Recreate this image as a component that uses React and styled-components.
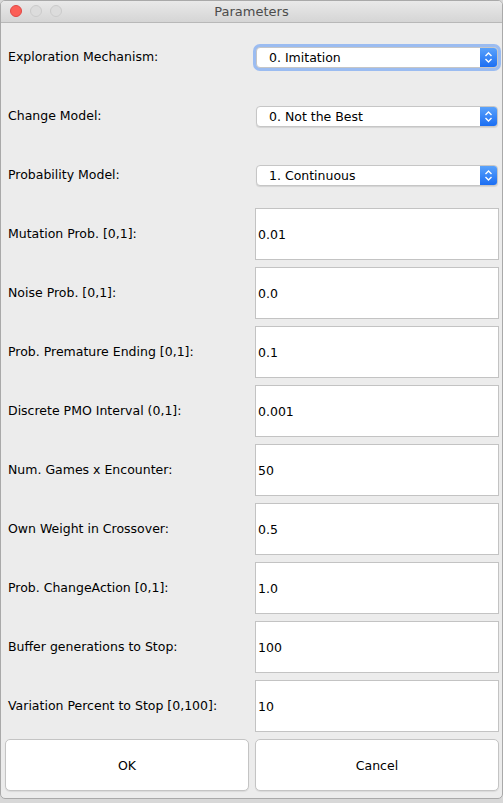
import React from "react";
import styled, { createGlobalStyle } from "styled-components";

const Global = createGlobalStyle`
  html, body {
    margin: 0;
    padding: 0;
    background: #d8d8d8;
  }
  body {
    font-family: "DejaVu Sans", "Liberation Sans", sans-serif;
  }
`;

const Window = styled.div`
  width: 503px;
  height: 799px;
  box-sizing: border-box;
  background: #ececec;
  border: 1px solid #a9a9a9;
  border-radius: 5px;
  overflow: hidden;
  display: flex;
  flex-direction: column;
`;

const TitleBar = styled.div`
  height: 21px;
  flex: none;
  position: relative;
  display: flex;
  align-items: center;
  justify-content: center;
  background: linear-gradient(#e9e9e9, #d5d5d5);
  border-bottom: 1px solid #b8b8b8;
  font-size: 13px;
  color: #4c4c4c;
`;

const Lights = styled.div`
  position: absolute;
  left: 9px;
  top: 4px;
  display: flex;
  gap: 8px;
`;

const Light = styled.span`
  width: 12px;
  height: 12px;
  border-radius: 50%;
  box-sizing: border-box;
  background: ${(p) => (p.$red ? "#fc5f57" : "#dcdcdc")};
  border: 1px solid ${(p) => (p.$red ? "#df4744" : "#cacaca")};
`;

const Form = styled.div`
  display: grid;
  grid-template-columns: 244px 244px;
  grid-auto-rows: 52px;
  column-gap: 6px;
  row-gap: 7px;
  padding: 8px 0 0 4px;
`;

const Label = styled.div`
  display: flex;
  align-items: center;
  padding-left: 3px;
  padding-bottom: 1px;
  font-size: 12.5px;
  color: #000;
`;

const ComboCell = styled.div`
  display: flex;
  align-items: center;
  padding-left: 1px;
`;

const Combo = styled.div`
  width: 242px;
  height: 21px;
  box-sizing: border-box;
  display: flex;
  background: #fff;
  border-radius: 4px;
  border: 1px solid #c6c6c6;
  box-shadow: ${(p) =>
    p.$focus ? "0 0 0 3px rgba(90,150,245,0.55)" : "0 1px 1px rgba(0,0,0,0.1)"};
  overflow: hidden;
`;

const ComboText = styled.div`
  flex: 1;
  display: flex;
  align-items: center;
  padding-left: 12px;
  font-size: 12.5px;
  color: #000;
`;

const ComboArrow = styled.div`
  width: 17px;
  display: flex;
  align-items: center;
  justify-content: center;
  background: linear-gradient(#5aa2fb, #1b6ef3);
`;

const Field = styled.div`
  box-sizing: border-box;
  height: 52px;
  width: 244px;
  background: #fff;
  border: 1px solid #c3c3c3;
  display: flex;
  align-items: center;
  padding-left: 2px;
  font-size: 12.5px;
  color: #000;
`;

const Button = styled.div`
  box-sizing: border-box;
  background: #fff;
  border: 1px solid #c4c4c4;
  border-radius: 5px;
  box-shadow: 0 1px 1px rgba(0, 0, 0, 0.08);
  display: flex;
  align-items: center;
  justify-content: center;
  font-size: 12.5px;
  color: #000;
`;

const Chevrons = () => (
  <svg width="9" height="13" viewBox="0 0 9 13">
    <path d="M1.5 5 L4.5 2 L7.5 5" fill="none" stroke="#fff" strokeWidth="1.4" />
    <path d="M1.5 8 L4.5 11 L7.5 8" fill="none" stroke="#fff" strokeWidth="1.4" />
  </svg>
);

const combos = [
  ["Exploration Mechanism:", "0. Imitation"],
  ["Change Model:", "0. Not the Best"],
  ["Probability Model:", "1. Continuous"],
];

const fields = [
  ["Mutation Prob. [0,1]:", "0.01"],
  ["Noise Prob. [0,1]:", "0.0"],
  ["Prob. Premature Ending [0,1]:", "0.1"],
  ["Discrete PMO Interval (0,1]:", "0.001"],
  ["Num. Games x Encounter:", "50"],
  ["Own Weight in Crossover:", "0.5"],
  ["Prob. ChangeAction [0,1]:", "1.0"],
  ["Buffer generations to Stop:", "100"],
  ["Variation Percent to Stop [0,100]:", "10"],
];

export default function App() {
  return (
    <>
      <Global />
      <Window>
        <TitleBar>
          <Lights>
            <Light $red />
            <Light />
            <Light />
          </Lights>
          Parameters
        </TitleBar>
        <Form>
          {combos.map(([label, value], i) => (
            <React.Fragment key={label}>
              <Label>{label}</Label>
              <ComboCell>
                <Combo $focus={i === 0}>
                  <ComboText>{value}</ComboText>
                  <ComboArrow>
                    <Chevrons />
                  </ComboArrow>
                </Combo>
              </ComboCell>
            </React.Fragment>
          ))}
          {fields.map(([label, value]) => (
            <React.Fragment key={label}>
              <Label>{label}</Label>
              <Field>{value}</Field>
            </React.Fragment>
          ))}
          <Button>OK</Button>
          <Button>Cancel</Button>
        </Form>
      </Window>
    </>
  );
}
